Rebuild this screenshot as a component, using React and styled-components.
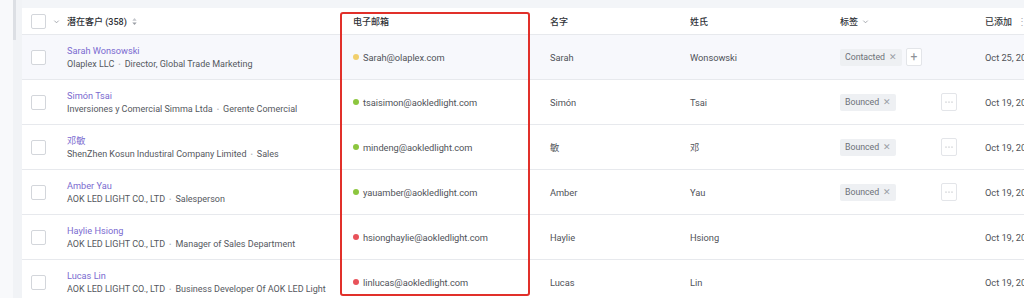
import React from "react";
import styled, { createGlobalStyle } from "styled-components";

const GlobalStyle = createGlobalStyle`
  html, body {
    margin: 0;
    padding: 0;
    background: #f3f5f8;
    overflow: hidden;
  }
  body {
    font-family: Roboto, "Noto Sans CJK SC", sans-serif;
    -webkit-font-smoothing: antialiased;
  }
`;

const COLS = "35px 286px 197px 140px 150px 145px 120px";

const Page = styled.div`
  display: flex;
  width: 1024px;
  height: 298px;
  overflow: hidden;
  position: relative;
`;

const Sidebar = styled.div`
  width: 22px;
  flex: none;
  display: flex;
  background: #f1f3f6;
`;

const SideTrack = styled.div`
  width: 13px;
  background: #f8f9fb;
`;

const SideThumb = styled.div`
  width: 3px;
  height: 40px;
  background: #dcdfe4;
`;

const Main = styled.div`
  flex: 1;
  padding-top: 8px;
  min-width: 0;
`;

const Panel = styled.div`
  background: #fff;
  width: 1100px;
`;

const Row = styled.div`
  display: grid;
  grid-template-columns: ${COLS};
  align-items: center;
  height: ${(p) => (p.$head ? "27px" : "45px")};
  border-bottom: 1px solid #e7e9ed;
  box-sizing: border-box;
  background: ${(p) => (p.$hover ? "#f7f8fc" : "#fff")};
`;

const Cell = styled.div`
  display: flex;
  align-items: center;
  padding: 0 ${(p) => (p.$pr ? p.$pr : "10px")} 0 10px;
  font-size: ${(p) => (p.$head ? "9px" : "9.3px")};
  letter-spacing: ${(p) => (p.$head ? "0" : "-0.05px")};
  color: ${(p) => (p.$head ? "#2f3237" : "#505359")};
  font-weight: ${(p) => (p.$head ? 500 : 400)};
  white-space: nowrap;
  min-width: 0;
`;

const CheckCell = styled.div`
  display: flex;
  align-items: center;
  gap: 7px;
  padding-left: 9px;
`;

const Checkbox = styled.span`
  width: 13px;
  height: 13px;
  border: 1px solid #d3d6db;
  border-radius: 2px;
  background: #fff;
  flex: none;
`;

const Caret = styled.svg`
  width: 7px;
  height: 7px;
  margin-left: ${(p) => p.$ml || "0"};
  flex: none;
`;

const Prospect = styled.div`
  display: flex;
  flex-direction: column;
  gap: 1px;
  padding: 1px 0 0 10px;
`;

const Name = styled.div`
  font-size: 9.2px;
  line-height: 13px;
  color: #7b6bd0;
`;

const Sub = styled.div`
  font-size: 9px;
  line-height: 13px;
  color: #55585e;
  white-space: nowrap;
`;

const Sep = styled.span`
  color: #b5b8bd;
  margin: 0 4px;
  font-size: 7px;
`;

const Dot = styled.span`
  width: 6px;
  height: 6px;
  border-radius: 50%;
  background: ${(p) => p.$color};
  margin-right: 4px;
  flex: none;
`;

const Tag = styled.span`
  display: inline-flex;
  align-items: center;
  gap: 4px;
  height: 17px;
  padding: 0 5px;
  background: #eef0f3;
  border-radius: 2px;
  font-size: 8.8px;
  color: #6d7178;
`;

const TagX = styled.span`
  font-size: 9px;
  color: #9a9ea5;
`;

const SmallBtn = styled.span`
  display: inline-flex;
  align-items: center;
  justify-content: center;
  width: 16px;
  height: 18px;
  border: 1px solid #e3e5e9;
  border-radius: 2px;
  background: #fff;
  color: #8d9197;
  font-size: 12px;
  margin-left: ${(p) => p.$ml || "0"};
  box-sizing: border-box;
  line-height: 1;
`;

const Handle = styled.span`
  color: #a9adb3;
  margin-left: 5px;
  font-size: 10px;
`;

const Highlight = styled.div`
  position: absolute;
  left: 340px;
  top: 12px;
  width: 190px;
  height: 284px;
  border: 2px solid #e1302a;
  border-radius: 3px;
  box-sizing: border-box;
  pointer-events: none;
`;

const ChevronDown = ({ ml }) => (
  <Caret viewBox="0 0 8 8" $ml={ml}>
    <path d="M1.5 3 L4 5.5 L6.5 3" fill="none" stroke="#9a9ea5" strokeWidth="1" />
  </Caret>
);

const SortIcon = () => (
  <Caret viewBox="0 0 8 10" $ml="4px" style={{ height: 9 }}>
    <path d="M4 1 L6.5 4 H1.5 Z" fill="#c4c7cc" />
    <path d="M4 9 L6.5 6 H1.5 Z" fill="#9a9ea5" />
  </Caret>
);

const MoreDots = () => (
  <svg width="8" height="2" viewBox="0 0 8 2">
    <circle cx="1" cy="1" r="0.6" fill="#9a9ea5" />
    <circle cx="4" cy="1" r="0.6" fill="#9a9ea5" />
    <circle cx="7" cy="1" r="0.6" fill="#9a9ea5" />
  </svg>
);

const rows = [
  {
    name: "Sarah Wonsowski",
    company: "Olaplex LLC",
    title: "Director, Global Trade Marketing",
    email: "Sarah@olaplex.com",
    dot: "#f1cf6c",
    first: "Sarah",
    last: "Wonsowski",
    tag: "Contacted",
    plus: true,
    date: "Oct 25, 2024",
    hover: true,
  },
  {
    name: "Simón Tsai",
    company: "Inversiones y Comercial Simma Ltda",
    title: "Gerente Comercial",
    email: "tsaisimon@aokledlight.com",
    dot: "#8cc63e",
    first: "Simón",
    last: "Tsai",
    tag: "Bounced",
    more: true,
    date: "Oct 19, 2024",
  },
  {
    name: "邓敏",
    company: "ShenZhen Kosun Industiral Company Limited",
    title: "Sales",
    email: "mindeng@aokledlight.com",
    dot: "#8cc63e",
    first: "敏",
    last: "邓",
    tag: "Bounced",
    more: true,
    date: "Oct 19, 2024",
  },
  {
    name: "Amber Yau",
    company: "AOK LED LIGHT CO., LTD",
    title: "Salesperson",
    email: "yauamber@aokledlight.com",
    dot: "#8cc63e",
    first: "Amber",
    last: "Yau",
    tag: "Bounced",
    more: true,
    date: "Oct 19, 2024",
  },
  {
    name: "Haylie Hsiong",
    company: "AOK LED LIGHT CO., LTD",
    title: "Manager of Sales Department",
    email: "hsionghaylie@aokledlight.com",
    dot: "#e8525a",
    first: "Haylie",
    last: "Hsiong",
    date: "Oct 19, 2024",
  },
  {
    name: "Lucas Lin",
    company: "AOK LED LIGHT CO., LTD",
    title: "Business Developer Of AOK LED Light",
    email: "linlucas@aokledlight.com",
    dot: "#e8525a",
    first: "Lucas",
    last: "Lin",
    date: "Oct 19, 2024",
  },
];

export default function App() {
  return (
    <>
      <GlobalStyle />
      <Page>
        <Sidebar>
          <SideTrack />
          <SideThumb />
        </Sidebar>
        <Main>
          <Panel>
            <Row $head>
              <CheckCell>
                <Checkbox />
                <ChevronDown />
              </CheckCell>
              <Cell $head>
                潜在客户 (358)
                <SortIcon />
              </Cell>
              <Cell $head>电子邮箱</Cell>
              <Cell $head>名字</Cell>
              <Cell $head>姓氏</Cell>
              <Cell $head>
                标签
                <ChevronDown ml="4px" />
              </Cell>
              <Cell $head>
                已添加
                <Handle>⋮</Handle>
              </Cell>
            </Row>
            {rows.map((r) => (
              <Row key={r.email} $hover={r.hover}>
                <CheckCell>
                  <Checkbox />
                </CheckCell>
                <Prospect>
                  <Name>{r.name}</Name>
                  <Sub>
                    {r.company}
                    <Sep>•</Sep>
                    {r.title}
                  </Sub>
                </Prospect>
                <Cell>
                  <Dot $color={r.dot} />
                  {r.email}
                </Cell>
                <Cell>{r.first}</Cell>
                <Cell>{r.last}</Cell>
                <Cell $pr="18px">
                  {r.tag && (
                    <Tag>
                      {r.tag}
                      <TagX>✕</TagX>
                    </Tag>
                  )}
                  {r.plus && <SmallBtn $ml="4px">+</SmallBtn>}
                  {r.more && (
                    <SmallBtn $ml="auto">
                      <MoreDots />
                    </SmallBtn>
                  )}
                </Cell>
                <Cell>{r.date}</Cell>
              </Row>
            ))}
          </Panel>
        </Main>
        <Highlight />
      </Page>
    </>
  );
}
